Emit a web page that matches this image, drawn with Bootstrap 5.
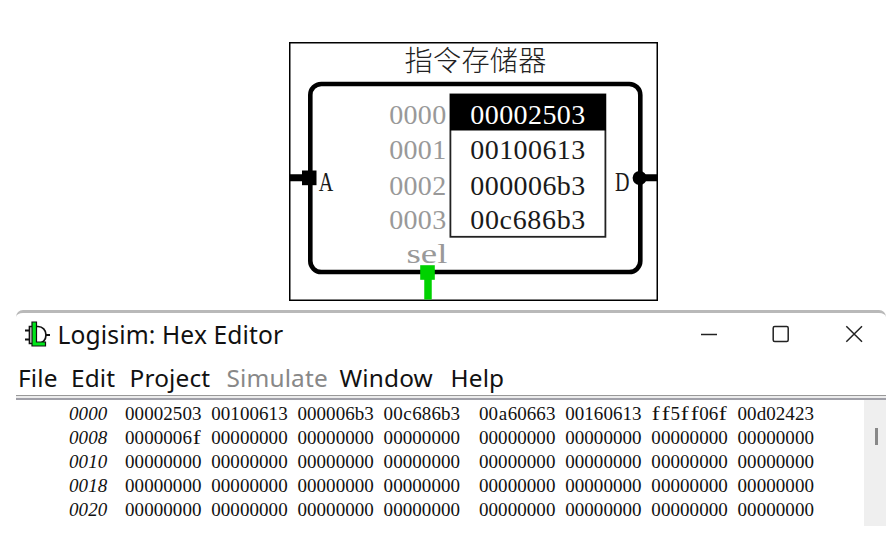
<!DOCTYPE html>
<html lang="zh-CN">
<head>
<meta charset="utf-8">
<title>Logisim: Hex Editor</title>
<link rel="stylesheet" href="https://cdn.jsdelivr.net/npm/bootstrap@5.3.0/dist/css/bootstrap.min.css">
<style>
body{width:889px;height:534px;overflow:hidden;background:#fff;color:#000}
.circuit{margin:42px 0 0 289px;width:369px;height:259px;flex:none;overflow:visible}
.circuit text{font-family:"Liberation Serif",serif;font-size:28px}
.circuit .title-cn{font-family:"Noto Sans CJK SC",sans-serif;font-weight:300;font-size:28.2px;fill:#222}
.editor-win{margin:9px 0 0 16px;width:870px;height:216px;border-top:3px solid #b9b9b9;border-radius:7px 7px 0 0;flex:none}
.titlebar,.menus{font-family:"Noto Sans","Open Sans",sans-serif;font-size:24px;line-height:32px;white-space:nowrap;color:#111}
.titlebar{height:45px;padding-left:9px;padding-top:6px}
.app-logo{margin-top:2px}
.app-title{margin-left:7.500px;width:240px;font-size:24.6px;letter-spacing:.13px}
.menus{height:37px;padding-left:2px;padding-top:4px;font-size:24.4px;letter-spacing:.15px}
.menus span{flex:none}
.m1{width:53px}.m2{width:58.500px}.m3{width:97px}.m4{width:113px}.m5{width:111px}.m6{width:60px}
.m4{color:#888}
.rule{height:5px;border-top:1px solid #999;border-bottom:2px solid #a0a0a8;background:#ececec}
.hexpane{height:126px}
.hexrows{padding-top:2px;padding-left:53px;font-family:"Liberation Serif",serif;font-size:19px;color:#111}
.hexline{height:24px;line-height:24px;white-space:nowrap}
.addr{width:56px;font-style:italic}
.word{width:86.2px}
.word.gap-after{width:95.4px}
.word i,.addr i{display:inline-block;width:9.57px;text-align:center;font-style:inherit}
.word .wide{transform:scaleX(1.25)}
.scroll-track{width:22px;background:#efefef;padding:28px 0 0 11px}
.thumb{width:3px;height:17px;background:#888}
</style>
<script src="https://cdn.jsdelivr.net/npm/bootstrap@5.3.0/dist/js/bootstrap.bundle.min.js"></script>
</head>
<body class="d-flex flex-column m-0">
<svg class="circuit d-block" viewBox="289 42 369 259">
  <rect x="289.75" y="42.75" width="367.5" height="257.5" fill="none" stroke="#000" stroke-width="1.5"/>
  <rect x="310.3" y="84" width="330" height="188" rx="11" fill="none" stroke="#000" stroke-width="4.6"/>
  <text class="title-cn" x="404.500" y="70.500" textLength="142">指令存储器</text>
  <rect x="450.4" y="94.4" width="155" height="142.4" fill="#fff" stroke="#222" stroke-width="1.8"/>
  <rect x="450" y="94" width="156" height="36.5"/>
  <g fill="#999">
    <text x="389.2" y="124" textLength="57">0000</text>
    <text x="389.2" y="159.3" textLength="57">0001</text>
    <text x="389.2" y="194.5" textLength="57">0002</text>
    <text x="389.2" y="229.3" textLength="57">0003</text>
    <text x="406.5" y="263.3" textLength="41" lengthAdjust="spacingAndGlyphs">sel</text>
  </g>
  <text x="470.3" y="124" textLength="115" fill="#fff">00002503</text>
  <g fill="#1a1a1a">
    <text x="470.3" y="159.3" textLength="115">00100613</text>
    <text x="470.3" y="194.5" textLength="115">000006b3</text>
    <text x="470.3" y="229.3" textLength="115">00c686b3</text>
    <text x="318.7" y="191.3" textLength="14.5" lengthAdjust="spacingAndGlyphs">A</text>
    <text x="615" y="191.3" textLength="14.5" lengthAdjust="spacingAndGlyphs">D</text>
  </g>
  <path d="M290 177.8H308M640 177.8H657" stroke="#000" stroke-width="7"/>
  <rect x="302" y="170.5" width="14.5" height="14.7"/>
  <circle cx="639.6" cy="178" r="7"/>
  <path d="M428 272V299.5" stroke="#00d200" stroke-width="7.5"/>
  <rect x="420.2" y="265.2" width="14.6" height="14.6" fill="#00d200"/>
</svg>
<main class="editor-win">
  <div class="titlebar d-flex">
    <svg class="app-logo" width="25" height="27" viewBox="0 0 25 27" fill="none">
      <path d="M0 9.5H4M0 18.500H4M21 14H25" stroke="#111" stroke-width="2"/>
      <path d="M4.500 5.500H13C17.500 5.500 21 9 21 14S17.500 22.500 13 22.500H4.500Z" fill="#fff" stroke="#111" stroke-width="1.7"/>
      <path d="M7 1H11.500V21H20.500V25H7Z" fill="#00e61a" stroke="#111" stroke-width="1.200"/>
    </svg>
    <span class="app-title">Logisim: Hex Editor</span>
    <svg class="ms-auto" width="186" height="32" viewBox="700 319 186 32" fill="none" stroke="#222" stroke-width="1.5">
      <path d="M701 334.500H717"/>
      <rect x="773.2" y="326.600" width="15" height="14.800" rx="1.500"/>
      <path d="M846.300 326.200L862 341.800M862 326.200L846.300 341.800"/>
    </svg>
  </div>
  <nav class="menus d-flex">
    <span class="m1">File</span><span class="m2">Edit</span><span class="m3">Project</span><span class="m4">Simulate</span><span class="m5">Window</span><span class="m6">Help</span>
  </nav>
  <div class="rule"></div>
  <div class="hexpane d-flex">
    <div class="hexrows flex-grow-1" id="hexrows"></div>
    <div class="scroll-track"><div class="thumb"></div></div>
  </div>
</main>
<script>
const zeros = n => Array(n).fill('00000000');
const rows = [
  ['0000', '00002503','00100613','000006b3','00c686b3','00a60663','00160613','ff5ff06f','00d02423'],
  ['0008', '0000006f', ...zeros(7)],
  ['0010', ...zeros(8)],
  ['0018', ...zeros(8)],
  ['0020', ...zeros(8)]
];
// Each character sits in a fixed-width cell so the columns line up.
const cells = s => [...s].map(c => `<i${c === 'f' ? ' class="wide"' : ''}>${c}</i>`).join('');
document.getElementById('hexrows').innerHTML = rows.map(r =>
  '<div class="hexline d-flex">' + r.map((w, k) =>
    `<div class="flex-shrink-0 ${k === 0 ? 'addr' : k === 4 ? 'word gap-after' : 'word'}">${cells(w)}</div>`).join('') + '</div>').join('');
</script>
</body>
</html>
